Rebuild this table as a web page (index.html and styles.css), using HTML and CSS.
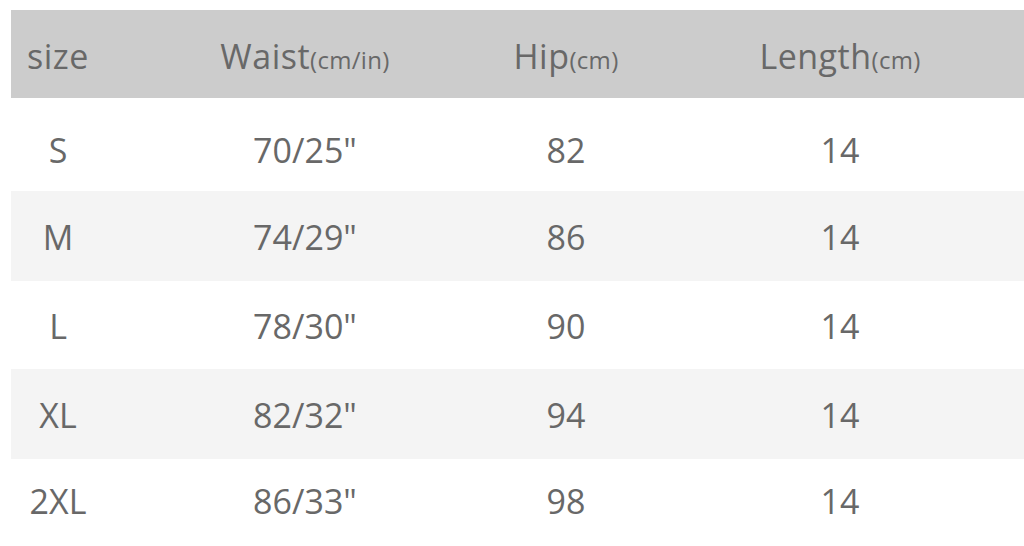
FILE: index.html
```html
<!DOCTYPE html>
<html>
<head>
<meta charset="utf-8">
<link rel="stylesheet" href="styles.css">
</head>
<body>
<div class="table">
  <div class="row head">
    <div class="cell">size</div>
    <div class="cell">Waist<span class="unit">(cm/in)</span></div>
    <div class="cell">Hip<span class="unit">(cm)</span></div>
    <div class="cell">Length<span class="unit">(cm)</span></div>
  </div>
  <div class="row r1">
    <div class="cell">S</div>
    <div class="cell">70/25"</div>
    <div class="cell">82</div>
    <div class="cell">14</div>
  </div>
  <div class="row r2 alt">
    <div class="cell">M</div>
    <div class="cell">74/29"</div>
    <div class="cell">86</div>
    <div class="cell">14</div>
  </div>
  <div class="row r3">
    <div class="cell">L</div>
    <div class="cell">78/30"</div>
    <div class="cell">90</div>
    <div class="cell">14</div>
  </div>
  <div class="row r4 alt">
    <div class="cell">XL</div>
    <div class="cell">82/32"</div>
    <div class="cell">94</div>
    <div class="cell">14</div>
  </div>
  <div class="row r5">
    <div class="cell">2XL</div>
    <div class="cell">86/33"</div>
    <div class="cell">98</div>
    <div class="cell">14</div>
  </div>
</div>
</body>
</html>
```
FILE: styles.css
```css
html, body {
  margin: 0;
  padding: 0;
  background: #ffffff;
  overflow: hidden;
}
body {
  width: 1024px;
  height: 546px;
}
.table {
  width: 1042px;
  margin: 10px 0 0 11px;
  font-family: "Open Sans", "Noto Sans", sans-serif;
  font-size: 34px;
  color: #686868;
}
.row {
  display: grid;
  grid-template-columns: 94px 400px 122px 426px;
  align-items: center;
  justify-items: center;
  box-sizing: border-box;
}
.cell {
  white-space: nowrap;
  line-height: 1.3;
}
.head {
  height: 88px;
  background: #cccccc;
  padding-top: 4px;
}
.head .cell {
  letter-spacing: 0.5px;
}
.unit {
  font-size: 24px;
  letter-spacing: 0.3px;
}
.r1 { height: 93px; padding-top: 12px; }
.r2 { height: 90px; padding-top: 2px; }
.r3 { height: 88px; padding-top: 2px; }
.r4 { height: 90px; padding-top: 2px; }
.r5 { height: 90px; padding-bottom: 6px; }
.alt {
  background: #f4f4f4;
}
```
